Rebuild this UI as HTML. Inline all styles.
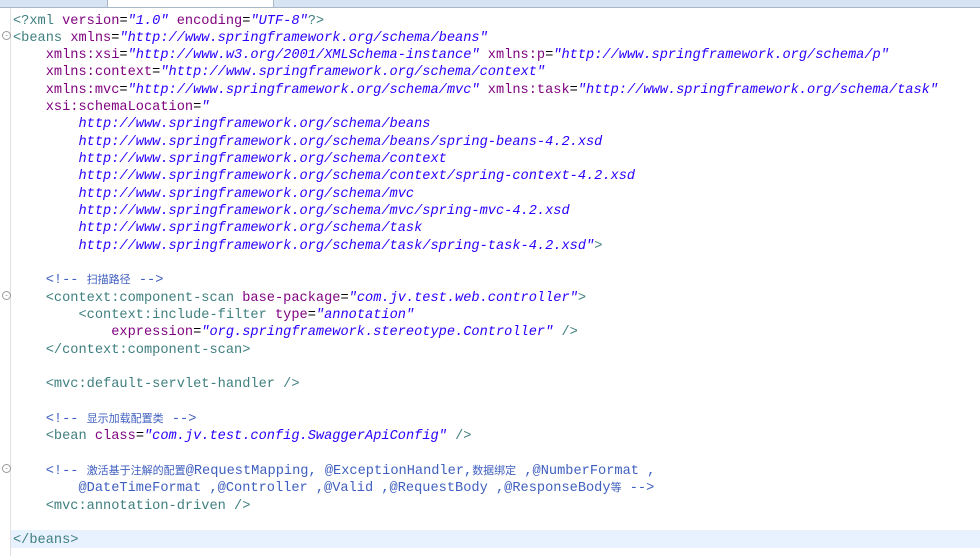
<!DOCTYPE html>
<html><head><meta charset="utf-8"><style>
html,body{margin:0;padding:0;width:980px;height:556px;overflow:hidden;background:#fff;}
.tabs{position:absolute;left:0;top:0;width:980px;height:7px;background:#d6e3f1;border-bottom:1px solid #a9b8c9;}
.tab{position:absolute;top:0;height:7px;background:#fff;border-left:1px solid #a9b8c9;border-right:1px solid #a9b8c9;}
.gut{position:absolute;left:0;top:8px;width:10px;height:548px;border-right:1px solid #e0e0e0;}
.code{position:absolute;left:13px;top:12.5px;font-family:"Liberation Mono","Noto Sans CJK SC",monospace;font-size:13.65px;color:#000;}
.code div{height:17.33px;line-height:17.33px;white-space:pre;}
.t{color:#3f7f7f}.a{color:#7f007f}.v{color:#2a00ff;font-style:italic}.c{color:#3f5fbf}
.cur{position:absolute;left:11px;top:530px;width:969px;height:18px;background:#e8f2fe;}
.fold{position:absolute;left:2px;width:7px;height:7px;border:1px solid #999;border-radius:50%;font-size:7px;line-height:7px;text-align:center;color:#777;background:#fff}
.z{font-size:11px}
</style></head><body>
<div class="tabs">
<div class="tab" style="left:107px;width:165px"></div>
</div>
<div class="gut"></div>
<div class="fold" style="top:31px">-</div>
<div class="fold" style="top:291px">-</div>
<div class="fold" style="top:464px">-</div>
<div class="cur"></div>
<div class="code"><div><span class="t">&lt;?xml </span><span class="a">version</span>=<span class="v">"1.0"</span> <span class="a">encoding</span>=<span class="v">"UTF-8"</span><span class="t">?&gt;</span></div><div><span class="t">&lt;beans</span> <span class="a">xmlns</span>=<span class="v">"http://www.springframework.org/schema/beans"</span></div><div>    <span class="a">xmlns:xsi</span>=<span class="v">"http://www.w3.org/2001/XMLSchema-instance"</span> <span class="a">xmlns:p</span>=<span class="v">"http://www.springframework.org/schema/p"</span></div><div>    <span class="a">xmlns:context</span>=<span class="v">"http://www.springframework.org/schema/context"</span></div><div>    <span class="a">xmlns:mvc</span>=<span class="v">"http://www.springframework.org/schema/mvc"</span> <span class="a">xmlns:task</span>=<span class="v">"http://www.springframework.org/schema/task"</span></div><div>    <span class="a">xsi:schemaLocation</span>=<span class="v">"</span></div><div><span class="v">        http://www.springframework.org/schema/beans</span></div><div><span class="v">        http://www.springframework.org/schema/beans/spring-beans-4.2.xsd</span></div><div><span class="v">        http://www.springframework.org/schema/context</span></div><div><span class="v">        http://www.springframework.org/schema/context/spring-context-4.2.xsd</span></div><div><span class="v">        http://www.springframework.org/schema/mvc</span></div><div><span class="v">        http://www.springframework.org/schema/mvc/spring-mvc-4.2.xsd</span></div><div><span class="v">        http://www.springframework.org/schema/task</span></div><div><span class="v">        http://www.springframework.org/schema/task/spring-task-4.2.xsd"</span><span class="t">&gt;</span></div><div> </div><div>    <span class="c">&lt;!-- <span class="z">扫描路径</span> --&gt;</span></div><div>    <span class="t">&lt;context:component-scan</span> <span class="a">base-package</span>=<span class="v">"com.jv.test.web.controller"</span><span class="t">&gt;</span></div><div>        <span class="t">&lt;context:include-filter</span> <span class="a">type</span>=<span class="v">"annotation"</span></div><div>            <span class="a">expression</span>=<span class="v">"org.springframework.stereotype.Controller"</span> <span class="t">/&gt;</span></div><div>    <span class="t">&lt;/context:component-scan&gt;</span></div><div> </div><div>    <span class="t">&lt;mvc:default-servlet-handler /&gt;</span></div><div> </div><div>    <span class="c">&lt;!-- <span class="z">显示加载配置类</span> --&gt;</span></div><div>    <span class="t">&lt;bean</span> <span class="a">class</span>=<span class="v">"com.jv.test.config.SwaggerApiConfig"</span> <span class="t">/&gt;</span></div><div> </div><div>    <span class="c">&lt;!-- <span class="z">激活基于注解的配置</span>@RequestMapping, @ExceptionHandler,<span class="z">数据绑定</span> ,@NumberFormat ,</span></div><div><span class="c">        @DateTimeFormat ,@Controller ,@Valid ,@RequestBody ,@ResponseBody<span class="z">等</span> --&gt;</span></div><div>    <span class="t">&lt;mvc:annotation-driven /&gt;</span></div><div> </div><div><span class="t">&lt;/beans&gt;</span></div></div>
</body></html>
